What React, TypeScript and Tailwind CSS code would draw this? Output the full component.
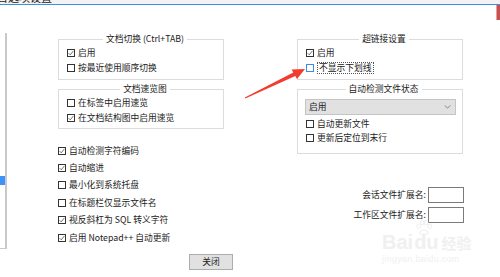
import type { ReactNode } from 'react'

function Box({ checked, focus }: { checked?: boolean; focus?: boolean }) {
  return (
    <span
      className={`flex h-[8px] w-[8px] shrink-0 items-center justify-center border bg-white ${
        focus ? 'border-[#3c8ce7]' : 'border-[#333333]'
      }`}
    >
      {checked && (
        <svg viewBox="0 0 8 8" className="h-[6px] w-[6px]">
          <path d="M0.8 4.2 L3 6.4 L7.2 1.2" fill="none" stroke="#333" strokeWidth="0.9" />
        </svg>
      )}
    </span>
  )
}

function Check({ label, checked, focus, h = 'h-[15px]' }: { label: ReactNode; checked?: boolean; focus?: boolean; h?: string }) {
  return (
    <label className={`flex items-center gap-[3px] ${h}`}>
      <Box checked={checked} focus={focus} />
      {focus ? (
        <span className="border border-dotted border-[#555] px-[1px] leading-[10px]">{label}</span>
      ) : (
        <span>{label}</span>
      )}
    </label>
  )
}

function Group({ title, children, className = '' }: { title: string; children: ReactNode; className?: string }) {
  return (
    <fieldset className={`w-[166px] border border-[#dcdcdc] ${className}`}>
      <legend className="mx-auto px-[3px] leading-[12px]">{title}</legend>
      {children}
    </fieldset>
  )
}

function ExtField({ label }: { label: string }) {
  return (
    <div className="flex h-[16px] items-center justify-end gap-[2px]">
      <span>{label}</span>
      <span className="h-[16px] w-[36px] border border-[#7a7a7a] bg-white" />
    </div>
  )
}

export default function App() {
  return (
    <div className="relative h-[277px] w-[500px] overflow-hidden bg-white font-['Noto_Sans_CJK_SC',sans-serif] text-[8.75px] leading-[12px] text-[#1b1b1b]">
      {/* window title, cut off at the top edge of the screenshot */}
      <div className="h-[4px] overflow-hidden bg-[#f3f3f3]">
        <div className="-ml-[3px] -mt-[9px] text-[11px] leading-[12px] text-[#222]">首选项设置</div>
      </div>
      <div className="h-[1px] bg-[#3b8fe0]" />

      <div className="flex">
        <div className="mt-[28px] h-[216px] w-[7px] border-b border-r-2 border-[#c9c9c9]">
          <div className="mt-[143px] h-[9px] w-[5px] bg-[#3d94f6]" />
        </div>

        <div className="ml-[51px] mt-[28px] w-[166px]">
          <Group title="文档切换 (Ctrl+TAB)" className="pb-[4px] pl-[8px]">
            <Check label="启用" checked />
            <Check label="按最近使用顺序切换" />
          </Group>
          <Group title="文档速览图" className="mt-[3px] pb-[3px] pl-[8px]">
            <Check label="在标签中启用速览" />
            <Check label="在文档结构图中启用速览" checked />
          </Group>
          <div className="mt-[13px]">
            <Check h="h-[17.4px]" label="自动检测字符编码" checked />
            <Check h="h-[17.4px]" label="自动缩进" checked />
            <Check h="h-[17.4px]" label="最小化到系统托盘" />
            <Check h="h-[17.4px]" label="在标题栏仅显示文件名" />
            <Check h="h-[17.4px]" label="视反斜杠为 SQL 转义字符" checked />
            <Check h="h-[17.4px]" label="启用 Notepad++ 自动更新" checked />
          </div>
        </div>

        <div className="ml-[73px] mt-[28px] w-[167px]">
          <Group title="超链接设置" className="pb-[4px] pl-[8px]">
            <Check label="启用" checked />
            <Check label="不显示下划线" focus />
          </Group>
          <Group title="自动检测文件状态" className="mt-[3px] pb-[8px] pl-[7px]">
            <div className="mt-[4px] flex h-[16px] w-[151px] items-center justify-between border border-[#c4c4c4] bg-[#e1e1e1] pl-[3px] pr-[4px]">
              <span>启用</span>
              <svg viewBox="0 0 8 5" className="h-[4px] w-[7px]">
                <path d="M0.5 0.5 L4 4 L7.5 0.5" fill="none" stroke="#666" strokeWidth="0.9" />
              </svg>
            </div>
            <div className="mt-[2px] pl-[1px]">
              <Check h="h-[14px]" label="自动更新文件" />
              <Check h="h-[14px]" label="更新后定位到末行" />
            </div>
          </Group>
          <div className="mt-[33px] flex flex-col gap-[4px]">
            <ExtField label="会话文件扩展名:" />
            <ExtField label="工作区文件扩展名:" />
          </div>
        </div>
      </div>

      <button className="ml-[189px] mt-[5px] flex h-[16px] w-[44px] items-center justify-center border border-[#adadad] bg-[#e1e1e1]">
        关闭
      </button>

      <div className="absolute right-0 top-[5px] h-[15px] w-[4px] border-l border-[#e6a0a0] bg-[#c85050]" />

      {/* faint watermark */}
      <div className="pointer-events-none absolute left-[382px] top-[220px] text-[#f0f0f0]">
        <svg viewBox="0 0 20 18" className="absolute left-[33px] top-0 h-[16px] w-[18px]">
          <g fill="none" stroke="#ebebeb" strokeWidth="1">
            <ellipse cx="4" cy="7" rx="2" ry="2.6" />
            <ellipse cx="8" cy="3" rx="2" ry="2.6" />
            <ellipse cx="12.5" cy="3" rx="2" ry="2.6" />
            <ellipse cx="16.5" cy="7" rx="2" ry="2.6" />
            <path d="M5 15 C6 10 14 10 15 15 C13 17 7 17 5 15 Z" />
          </g>
        </svg>
        <div className="mt-[12px] flex items-end font-['Liberation_Sans',sans-serif] text-[20px] font-bold leading-[20px]">
          <span>Bai</span>
          <span className="ml-[1px]">du</span>
          <span className="ml-[3px] font-['Noto_Sans_CJK_SC',sans-serif] text-[15px] leading-[18px]">经验</span>
        </div>
        <div className="mt-[2px] font-['Liberation_Sans',sans-serif] text-[9px] leading-[10px] tracking-[0.3px]">jingyan.baidu.com</div>
      </div>

      <svg className="pointer-events-none absolute left-0 top-0" width="500" height="277" viewBox="0 0 500 277">
        <polygon
          points="244.8,97.4 293.3,72.4 291.6,69.4 305,69 297,79 295.3,76.1 245.3,98.6"
          fill="#f23c30"
        />
      </svg>
    </div>
  )
}
